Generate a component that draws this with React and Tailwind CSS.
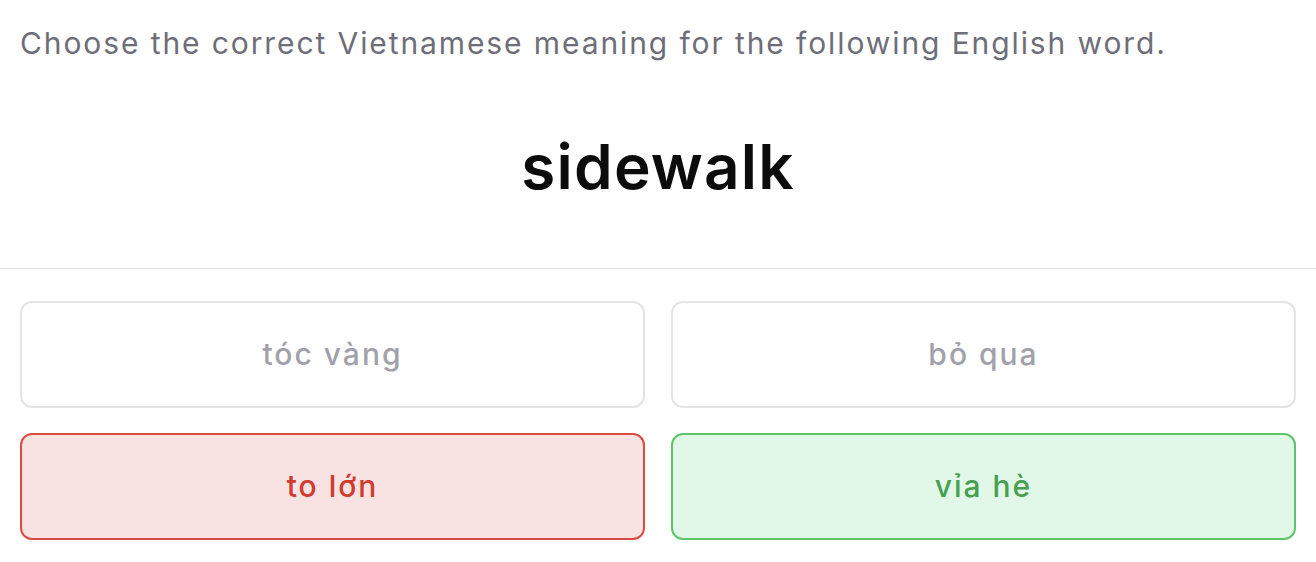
import React from 'react';

const options = [
  { label: 'tóc vàng', state: 'idle' },
  { label: 'bỏ qua', state: 'idle' },
  { label: 'to lớn', state: 'wrong' },
  { label: 'vỉa hè', state: 'right' },
];

const styles = {
  idle: 'border-[#e4e4e7] bg-white text-[#a1a1aa]',
  wrong: 'border-[#dc4a44] bg-[#f8e2e2] text-[#d23a30]',
  right: 'border-[#5ec46b] bg-[#e1f8e8] text-[#46a04f]',
};

const App = () => {
  return (
    <div className="min-h-screen bg-white font-['Inter',sans-serif]">
      <p className="px-5 pt-[28px] text-[30px] leading-[30px] tracking-[1.9px] text-[#6e6e78]">
        Choose the correct Vietnamese meaning for the following English word.
      </p>

      <h1 className="mt-[79px] text-center text-[62px] font-semibold leading-[60px] tracking-[1.2px] text-[#0c0c0c]">
        sidewalk
      </h1>

      <div className="mt-[71px] border-t border-[#e4e4e7]" />

      <div className="grid grid-cols-2 gap-x-[26px] gap-y-[25px] px-5 pt-[32px]">
        {options.map((opt) => (
          <button
            key={opt.label}
            className={`flex h-[107px] items-center justify-center rounded-xl border-2 text-[30px] font-medium tracking-[2px] ${styles[opt.state]}`}
          >
            {opt.label}
          </button>
        ))}
      </div>
    </div>
  );
};

export default App;
